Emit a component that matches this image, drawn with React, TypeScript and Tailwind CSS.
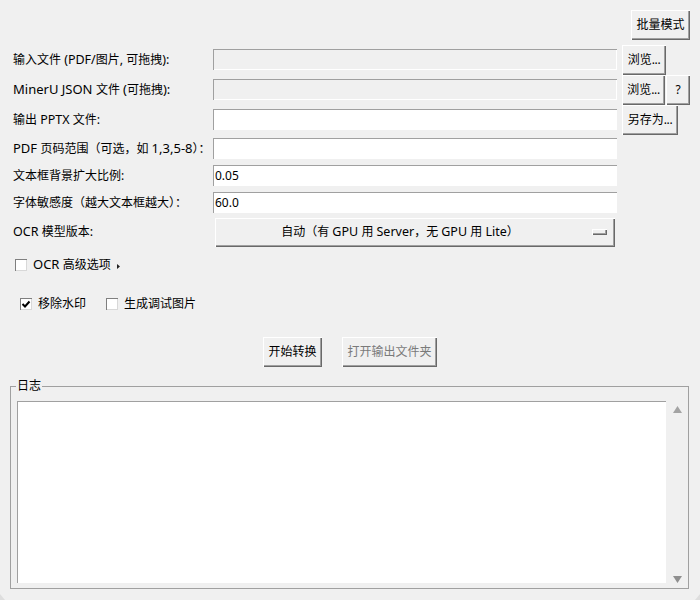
import React from "react"

const font = { fontFamily: '"Noto Sans", "Noto Sans CJK SC", sans-serif' }

const raised = "shadow-[inset_1px_1px_0_#ffffff,inset_-1px_-1px_0_#696969,inset_-2px_-2px_0_#a0a0a0]"
const sunken = "shadow-[inset_1px_1px_0_#a0a0a0,inset_-1px_-1px_0_#ffffff]"

function Btn({ children, className = "", disabled = false }: { children: React.ReactNode; className?: string; disabled?: boolean }) {
  return (
    <button
      disabled={disabled}
      className={`flex items-center justify-center bg-[#f0f0f0] text-[12px] leading-none whitespace-nowrap ${raised} ${disabled ? "text-[#7a7a7a]" : "text-black"} ${className}`}
    >
      {children}
    </button>
  )
}

function Dots() {
  return <span className="tracking-[-0.4px]">...</span>
}

// latin runs sit a bit wider than the CJK ones in the reference
function L({ children, className = "text-[12.5px]" }: { children: React.ReactNode; className?: string }) {
  return <span className={className}>{children}</span>
}

function Field({ value = "", disabled = false, className = "" }: { value?: string; disabled?: boolean; className?: string }) {
  return (
    <input
      readOnly
      value={value}
      className={`h-[21px] w-[404px] px-[2px] text-[12px] text-black outline-none ${sunken} ${disabled ? "bg-[#f0f0f0]" : "bg-white"} ${className}`}
    />
  )
}

function Row({ label, height, children }: { label: React.ReactNode; height: string; children: React.ReactNode }) {
  return (
    <div className={`flex items-center ${height}`}>
      <div className="w-[213px] pl-[13px] text-[12px] whitespace-nowrap text-black">{label}</div>
      {children}
    </div>
  )
}

function Check({ label, checked = false, className = "", children }: { label: React.ReactNode; checked?: boolean; className?: string; children?: React.ReactNode }) {
  return (
    <div className={`flex items-center gap-[6px] text-[12px] text-black ${className}`}>
      <span className="flex h-[12px] w-[12px] items-center justify-center bg-white shadow-[inset_1px_1px_0_#7f7f7f,inset_-1px_-1px_0_#d8d8d8]">
        {checked && (
          <svg width="12" height="12" viewBox="0 0 12 12">
            <path d="M2.5 6 L5 8.5 L9.5 3.5" fill="none" stroke="#000" strokeWidth="2" />
          </svg>
        )}
      </span>
      <span className="whitespace-nowrap">{label}</span>
      {children}
    </div>
  )
}

export default function App() {
  return (
    <div className="relative h-[600px] w-[700px] overflow-hidden bg-[#f0f0f0] pt-[10px]" style={font}>
      <div className="flex justify-end pr-[10px]">
        <Btn className="h-[30px] w-[59px]">批量模式</Btn>
      </div>

      <div className="mt-[5px]">
        <Row label={<>输入文件 <L>(PDF/</L>图片<L>, </L>可拖拽<L>):</L></>} height="h-[30px]">
          <Field disabled className="mb-[1px]" />
          <Btn className="ml-[5px] h-[30px] w-[44px]">浏览<Dots /></Btn>
        </Row>
        <Row label={<><L className="text-[13px]">MinerU JSON </L>文件 <L className="text-[13px]">(</L>可拖拽<L className="text-[13px]">):</L></>} height="h-[30px]">
          <Field disabled className="mb-[1px]" />
          <Btn className="ml-[5px] h-[30px] w-[43px]">浏览<Dots /></Btn>
          <Btn className="ml-[1px] h-[30px] w-[24px]">?</Btn>
        </Row>
        <Row label={<>输出 <L>PPTX </L>文件<L>:</L></>} height="h-[30px]">
          <Field className="mb-[1px]" />
          <Btn className="ml-[5px] h-[30px] w-[56px]">另存为<Dots /></Btn>
        </Row>
        <Row label={<><L className="text-[13px]">PDF </L>页码范围（可选，如 <L className="text-[13px]">1,3,5-8</L>）：</>} height="h-[27px]">
          <Field />
        </Row>
        <Row label="文本框背景扩大比例:" height="h-[27px]">
          <Field value="0.05" />
        </Row>
        <Row label="字体敏感度（越大文本框越大）：" height="h-[27px]">
          <Field value="60.0" />
        </Row>
        <Row label={<><L>OCR </L>模型版本<L>:</L></>} height="h-[33px]">
          <div className={`relative ml-[2px] flex h-[29px] w-[400px] items-center justify-center bg-[#f0f0f0] pr-[30px] text-[12px] text-black ${raised}`}>
            <span className="whitespace-nowrap">自动（有 <L>GPU </L>用 <L>Server</L>，无 <L>GPU </L>用 <L>Lite</L>）</span>
            <span className={`absolute right-[8px] top-[11px] h-[6px] w-[15px] ${raised}`} />
          </div>
        </Row>
      </div>

      <Check label={<><L className="text-[13px]">OCR </L>高级选项</>} className="ml-[15px] mt-[7px] h-[18px]">
        <svg width="3" height="5" viewBox="0 0 3 5" className="mt-[2px]"><path d="M0 0 L3 2.5 L0 5 Z" fill="#222" /></svg>
      </Check>

      <div className="ml-[20px] mt-[21px] flex h-[18px] gap-[20px]">
        <Check label="移除水印" checked />
        <Check label="生成调试图片" />
      </div>

      <div className="ml-[263px] mt-[24px] flex gap-[20px]">
        <Btn className="h-[30px] w-[59px]">开始转换</Btn>
        <Btn disabled className="h-[30px] w-[95px]">打开输出文件夹</Btn>
      </div>

      <div className="relative ml-[10px] mt-[19px] flex h-[203px] w-[679px] border border-[#a0a0a0] pl-[6px] pt-[14px]">
        <span className="absolute left-[5px] top-[-8px] bg-[#f0f0f0] px-[1px] text-[12px] leading-[14px] text-black">日志</span>
        <div className={`h-[182px] w-[649px] bg-white ${sunken}`} />
        <div className="flex flex-1 flex-col items-center justify-between pb-[5px] pt-[5px]">
          <svg width="9" height="7" viewBox="0 0 9 7"><path d="M4.5 0 L9 7 L0 7 Z" fill="#a3a3a3" /></svg>
          <svg width="9" height="7" viewBox="0 0 9 7"><path d="M0 0 L9 0 L4.5 7 Z" fill="#8f8f8f" /></svg>
        </div>
      </div>

      {/* window corners */}
      <svg width="5" height="6" viewBox="0 0 5 6" className="absolute bottom-0 left-0"><path d="M0 0 L5 6 L0 6 Z" fill="#dedede" /></svg>
      <svg width="5" height="6" viewBox="0 0 5 6" className="absolute bottom-0 right-0"><path d="M5 0 L0 6 L5 6 Z" fill="#dedede" /></svg>
    </div>
  )
}
